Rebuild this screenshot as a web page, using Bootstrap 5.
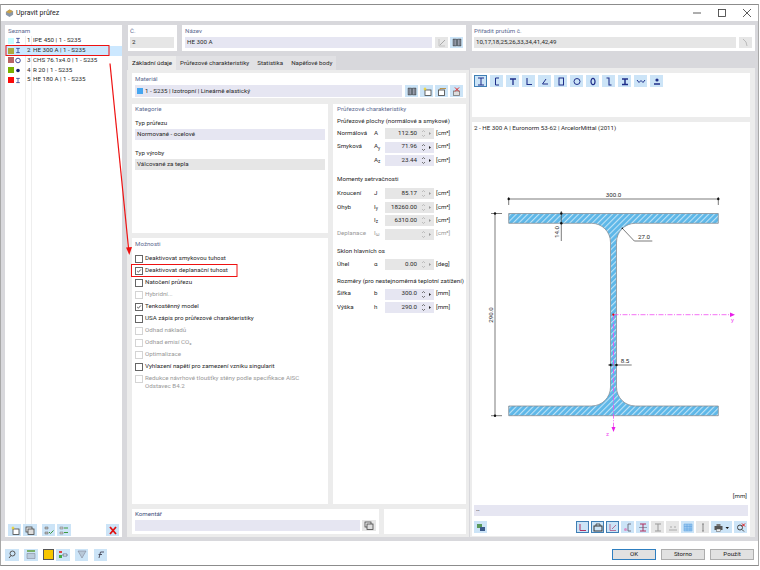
<!DOCTYPE html>
<html lang="cs">
<head>
    <meta charset="UTF-8">
    <title>Upravit průřez</title>
    <link href="https://cdn.jsdelivr.net/npm/bootstrap@5.3.0/dist/css/bootstrap.min.css" rel="stylesheet">
    <style>
        html, body { height: 570px; overflow: hidden; background: #fff; }
        body { font-family: Roboto, "Open Sans", "Liberation Sans", sans-serif; font-size: 6.2px; line-height: 1.2; color: #2a2a2a; }

        .dlg { width: 759px; height: 562px; margin-top: 4px; border-top: 1px solid #8c8c8c; border-right: 1px solid #a8a8a8; border-bottom: 1px solid #8c8c8c; border-left: 1px solid #a8a8a8; position: relative; }
        .dlg-title { height: 16px; padding-left: 4px; font-size: 7px; color: #222; }
        .dlg-main { height: 520px; background: #d8d8dc; padding: 4px 3px 4px 4px; }
        .dlg-foot { height: 24px; padding: 3px 4px 0 4px; }

        .win-btns { gap: 5px; padding-right: 1px; }
        .win-btn { width: 20px; text-align: center; line-height: 8px; }

        .pane { background: #fff; padding: .5px 3px 0; }
        .pane-cap { color: #5d6b91; height: 10px; line-height: 10px; margin-bottom: 1.5px; }
        .gray-wrap { background: #ececec; }

        /* left list */
        .list-pane { width: 117px; flex: none; padding: 0; background: #fff linear-gradient(#eee, #eee) 20px 0 / 1px 100% no-repeat; position: relative; }
        .list-pane::after { content: ""; position: absolute; top: 0; bottom: 0; left: 26px; width: 1px; background: #eee; }
        .list-cap { padding: .5px 3px 0; margin: 0; height: 11px; background: #fff; position: relative; z-index: 1; }
        .list-row { height: 9.8px; display: flex; align-items: center; padding-left: 3px; white-space: nowrap; position: relative; z-index: 1; }
        .list-row.sel { background: #cce8ff; }
        .swatch { width: 6px; height: 6px; margin-right: 1px; flex: none; }
        .list-ico { width: 6px; height: 7px; margin-right: 6px; flex: none; }
        .list-no { width: 6px; flex: none; }
        .list-tools { padding: 0 3px 1px; position: relative; z-index: 1; background: #fff; }

        /* fields */
        .fld { background: #e6e6f2; height: 11px; line-height: 11px; padding: 0 2px; font-size: 6.2px; border: 0; border-radius: 0; color: #2a2a2a; min-height: 0; }
        .fld.off { background: #e6e6e6; }
        .form-select.fld { height: 11px; padding: 0 2px; background-size: 9px 8px; background-position: right 2px center; font-family: inherit; line-height: 11px; }

        /* tabs */
        .tab-strip { height: 14px; margin-top: 5px; border: 0; flex-wrap: nowrap; padding-left: 1px; }
        .tab-strip .nav-link { font-size: 6.2px; padding: 0 4px; height: 14px; line-height: 14px; border: 0; border-radius: 0; background: #e1e1e4; color: #2a2a2a; margin: 0; }
        .tab-strip .nav-link.active { background: #ececec; color: #222; }
        .tab-box { padding: 3px 3px 3px 5px; gap: 5.5px; height: 467px; width: 342px; }

        /* props */
        .prop-row { display: grid; grid-template-columns: 37px 11px 49px auto; align-items: center; height: 13.4px; white-space: nowrap; }
        .prop-val { background: #e6e6f2; height: 11px; display: flex; align-items: center; justify-content: flex-end; }
        .prop-val.off { background: #e6e6e6; }
        .prop-val .num { padding-right: 2px; }
        .spin { width: 15px; flex: none; display: flex; align-items: center; }
        .prop-unit { padding-left: 2px; }
        .prop-head { height: 11.5px; line-height: 11.5px; white-space: nowrap; }
        .dim { color: #999; }

        /* options */
        .opt { display: flex; align-items: flex-start; min-height: 0; height: 12px; gap: 2.5px; padding-left: 0; margin: 0; white-space: nowrap; }
        .opt .form-check-input { width: 7.5px; height: 7.5px; margin: 2.2px 0 0 0; flex: none; border: .8px solid #666; border-radius: 0; background-color: #fff; float: none; opacity: 1; background-size: 100%; }
        .opt .form-check-input:checked { background-color: #fff; border-color: #666; background-image: url("data:image/svg+xml,%3csvg xmlns='http://www.w3.org/2000/svg' viewBox='0 0 20 20'%3e%3cpath fill='none' stroke='%23444' stroke-width='3' d='M4 10l4 4 8-9'/%3e%3c/svg%3e"); }
        .opt .form-check-input:disabled { border-color: #d4d4d4; }
        .opt .form-check-label { line-height: 7.7px; margin-top: 2px; }
        .opt.off .form-check-input ~ .form-check-label { color: #999; opacity: 1; }

        /* tool buttons */
        .tb { width: 13px; height: 12px; background: #cce4f7; display: inline-flex; align-items: center; justify-content: center; flex: none; padding: 0; border: 0; border-radius: 0; }
        .tb.wide { width: 14px; }
        .tb.short { height: 11px; }
        .tb.grey { background: #e6e6e6; }
        .tb.on { outline: 1px solid #3f7fb5; outline-offset: -1px; }
        .tb svg { width: 10px; height: 9px; display: block; }

        .shape-bar { gap: 3px; height: 44px; padding: 2px; flex: none; }
        .draw-svg { display: block; width: 274px; height: 366px; flex: none; }
        .draw-svg text { font-family: Roboto, "Open Sans", "Liberation Sans", sans-serif; font-size: 6.2px; fill: #2a2a2a; }

        .foot-btn { width: 44px; height: 11.5px; padding: 0; font-size: 6.2px; line-height: 9px; border: 1px solid #adadad; border-radius: 0; background: #e1e1e1; color: #222; }
        .foot-btn.main-btn { border: 1.5px solid #2f7fc0; }

        .overlay { position: absolute; left: -1px; top: -5px; width: 760px; height: 570px; pointer-events: none; z-index: 5; }
    </style>
</head>
<body>
<svg width="0" height="0" class="position-absolute">
    <defs>
        <pattern id="hatch" width="4" height="4" patternUnits="userSpaceOnUse" patternTransform="rotate(45)">
            <rect width="4" height="4" fill="#5db7e8"/>
            <rect width="1.1" height="4" fill="#bfe3f6"/>
        </pattern>
        <symbol id="i-ibeam" viewBox="0 0 10 9"><path d="M2 1h6M2 8h6M5 1v7" fill="none" stroke="#2b3a8c" stroke-width="1.3"/></symbol>
        <symbol id="i-new" viewBox="0 0 10 9"><rect x="3" y="3" width="6" height="5.5" fill="#fff" stroke="#444" stroke-width=".8"/><path d="M3 0l.7 1.5L5 2l-1.3.6L3 4l-.7-1.4L1 2l1.3-.5z" fill="#f2d21b"/></symbol>
        <symbol id="i-copy" viewBox="0 0 10 9"><rect x="1" y="1" width="6" height="5" fill="#eee" stroke="#444" stroke-width=".8"/><rect x="3" y="3" width="6" height="5.5" fill="#ddd" stroke="#444" stroke-width=".8"/></symbol>
        <symbol id="i-checks" viewBox="0 0 10 9"><path d="M1 1h3v2H1zM1 6h3v2H1z" fill="#bbb" stroke="#666" stroke-width=".5"/><path d="M5 6l1.5 1.5L9.5 4.5" fill="none" stroke="#3c9a3c" stroke-width="1"/></symbol>
        <symbol id="i-checks2" viewBox="0 0 10 9"><path d="M1 1h3v2H1zM1 6h3v2H1z" fill="#ccc" stroke="#777" stroke-width=".5"/><path d="M5 2h4M5 6.5h4" stroke="#3c9a3c" stroke-width="1"/></symbol>
        <symbol id="i-book" viewBox="0 0 10 9"><path d="M1 1h3.600v7H1zM5.400 1H9v7H5.400z" fill="#56606c" stroke="#333" stroke-width=".4"/><path d="M2 1.500v6M3.400 1.500v6M6.500 1.500v6M7.900 1.500v6" stroke="#dde" stroke-width=".5"/></symbol>
        <symbol id="i-box" viewBox="0 0 10 9"><rect x="1.5" y="3" width="6" height="5.5" fill="#fff" stroke="#555" stroke-width=".9"/><path d="M3 3V1.500h6" fill="none" stroke="#b88a3a" stroke-width=".9"/></symbol>
        <symbol id="i-del" viewBox="0 0 10 9"><rect x="1.5" y="4" width="6" height="4.5" fill="#ddd" stroke="#777" stroke-width=".8"/><path d="M3 .5l4 4M7 .5l-4 4" stroke="#d22" stroke-width="1"/></symbol>
        <symbol id="i-x" viewBox="0 0 10 9"><path d="M2 1l6 7M8 1L2 8" stroke="#e01010" stroke-width="1.8"/></symbol>
        <symbol id="i-edit" viewBox="0 0 10 9"><path d="M2 1v7h6" fill="none" stroke="#bbb" stroke-width=".8"/><path d="M3 7l5-5" stroke="#aaa" stroke-width="1"/></symbol>
        <symbol id="i-spin" viewBox="0 0 15 9"><path d="M3 3l1.500-1.500L6 3M3 6l1.500 1.500L6 6" fill="none" stroke="#444" stroke-width=".7"/><path d="M10 3l2 1.500L10 6z" fill="#222"/></symbol>
        <symbol id="i-spin-off" viewBox="0 0 15 9"><path d="M3 3l1.500-1.500L6 3M3 6l1.500 1.500L6 6" fill="none" stroke="#aaa" stroke-width=".7"/><path d="M10 3l2 1.500L10 6z" fill="#999"/></symbol>
    </defs>
</svg>

<div class="dlg d-flex flex-column">
    <!-- title -->
    <div class="dlg-title d-flex align-items-center">
        <svg width="9" height="10" viewBox="0 0 10 10" style="margin-right:2px"><path d="M1 4l4-3 4 2v4l-4 2.500L1 7z" fill="#8a97a8"/><path d="M5 1l4 2-4 2.500L1 4z" fill="#c9a24a"/></svg>
        <span class="flex-grow-1">Upravit průřez</span>
        <div class="d-flex win-btns">
            <span class="win-btn"><svg width="8" height="8" viewBox="0 0 8 8"><path d="M0 4h8" stroke="#333" stroke-width=".8"/></svg></span>
            <span class="win-btn"><svg width="8" height="8" viewBox="0 0 8 8"><rect x=".5" y=".5" width="7" height="7" fill="none" stroke="#333" stroke-width=".8"/></svg></span>
            <span class="win-btn"><svg width="8" height="8" viewBox="0 0 8 8"><path d="M0 0l8 8M8 0L0 8" stroke="#333" stroke-width=".8"/></svg></span>
        </div>
    </div>

    <div class="dlg-main d-flex">
        <!-- Seznam -->
        <div class="pane list-pane d-flex flex-column" style="margin-right:5px">
            <div class="pane-cap list-cap">Seznam</div>
            <div class="flex-grow-1">
                <div class="list-row"><span class="swatch" style="background:#c8fbff"></span><svg class="list-ico"><use href="#i-ibeam"/></svg><span class="list-no">1</span><span>IPE 450 | 1 - S235</span></div>
                <div class="list-row sel"><span class="swatch" style="background:#aaa840"></span><svg class="list-ico"><use href="#i-ibeam"/></svg><span class="list-no">2</span><span>HE 300 A | 1 - S235</span></div>
                <div class="list-row"><span class="swatch" style="background:#b86464"></span><svg class="list-ico" viewBox="0 0 6 7"><circle cx="3" cy="3.5" r="2.3" fill="none" stroke="#2b3a8c" stroke-width=".9"/></svg><span class="list-no">3</span><span>CHS 76.1x4.0 | 1 - S235</span></div>
                <div class="list-row"><span class="swatch" style="background:#7ab000"></span><svg class="list-ico" viewBox="0 0 6 7"><circle cx="3" cy="3.5" r="1.8" fill="#12206e"/></svg><span class="list-no">4</span><span>R 20 | 1 - S235</span></div>
                <div class="list-row"><span class="swatch" style="background:#fa0a0a"></span><svg class="list-ico"><use href="#i-ibeam"/></svg><span class="list-no">5</span><span>HE 180 A | 1 - S235</span></div>
            </div>
            <div class="list-tools d-flex">
                <button class="tb"><svg><use href="#i-new"/></svg></button>
                <button class="tb wide" style="margin-left:2px"><svg><use href="#i-copy"/></svg></button>
                <button class="tb" style="margin-left:5px"><svg><use href="#i-checks"/></svg></button>
                <button class="tb wide" style="margin-left:2px"><svg><use href="#i-checks2"/></svg></button>
                <button class="tb ms-auto"><svg><use href="#i-x"/></svg></button>
            </div>
        </div>

        <!-- middle column -->
        <div class="d-flex flex-column" style="width:342px;flex:none;margin-right:1px">
            <div class="d-flex" style="gap:5px;padding-left:1px">
                <div class="pane" style="width:49px;height:26px;padding-left:2px">
                    <div class="pane-cap">Č.</div>
                    <div class="fld off">2</div>
                </div>
                <div class="pane" style="width:284px;height:26px">
                    <div class="pane-cap">Název</div>
                    <div class="d-flex" style="gap:2px">
                        <div class="fld flex-grow-1" style="margin-right:1.5px">HE 300 A</div>
                        <button class="tb grey short"><svg><use href="#i-edit"/></svg></button>
                        <button class="tb short"><svg><use href="#i-book"/></svg></button>
                    </div>
                </div>
            </div>
            <ul class="nav nav-tabs tab-strip">
                <li class="nav-item"><a class="nav-link active" href="#">Základní údaje</a></li>
                <li class="nav-item"><a class="nav-link" href="#">Průřezové charakteristiky</a></li>
                <li class="nav-item"><a class="nav-link" href="#">Statistika</a></li>
                <li class="nav-item"><a class="nav-link" href="#">Napěťové body</a></li>
            </ul>
            <div class="gray-wrap tab-box d-flex flex-column">
                <div class="pane" style="height:25px;flex:none">
                    <div class="pane-cap">Materiál</div>
                    <div class="d-flex" style="gap:2px">
                        <div class="form-select fld flex-grow-1 d-flex align-items-center" style="height:12px;margin-right:1px"><span class="swatch" style="background:#46a6f0;margin-right:2px"></span>1 - S235 | Izotropní | Lineárně elastický</div>
                        <button class="tb"><svg><use href="#i-book"/></svg></button>
                        <button class="tb"><svg><use href="#i-new"/></svg></button>
                        <button class="tb"><svg><use href="#i-box"/></svg></button>
                        <button class="tb"><svg><use href="#i-del"/></svg></button>
                    </div>
                </div>

                <div class="d-flex" style="gap:5px;height:400px;flex:none">
                    <div class="d-flex flex-column" style="width:196px;gap:5px;flex:none">
                        <div class="pane" style="height:129.5px;flex:none">
                            <div class="pane-cap">Kategorie</div>
                            <div style="margin-top:3.5px;height:11px;line-height:11px">Typ průřezu</div>
                            <select class="form-select fld"><option>Normované - ocelové</option></select>
                            <div style="margin-top:8px;height:11px;line-height:11px">Typ výroby</div>
                            <div class="fld off">Válcované za tepla</div>
                        </div>
                        <div class="pane flex-grow-1">
                            <div class="pane-cap" style="margin-bottom:4.5px">Možnosti</div>
                            <div class="form-check opt"><input class="form-check-input" type="checkbox"><label class="form-check-label">Deaktivovat smykovou tuhost</label></div>
                            <div class="form-check opt"><input class="form-check-input" type="checkbox" checked><label class="form-check-label">Deaktivovat deplanační tuhost</label></div>
                            <div class="form-check opt"><input class="form-check-input" type="checkbox"><label class="form-check-label">Natočení průřezu</label></div>
                            <div class="form-check opt off"><input class="form-check-input" type="checkbox" disabled><label class="form-check-label">Hybridní...</label></div>
                            <div class="form-check opt"><input class="form-check-input" type="checkbox" checked><label class="form-check-label">Tenkostěnný model</label></div>
                            <div class="form-check opt"><input class="form-check-input" type="checkbox"><label class="form-check-label">USA zápis pro průřezové charakteristiky</label></div>
                            <div class="form-check opt off"><input class="form-check-input" type="checkbox" disabled><label class="form-check-label">Odhad nákladů</label></div>
                            <div class="form-check opt off"><input class="form-check-input" type="checkbox" disabled><label class="form-check-label">Odhad emisí CO₂</label></div>
                            <div class="form-check opt off"><input class="form-check-input" type="checkbox" disabled><label class="form-check-label">Optimalizace</label></div>
                            <div class="form-check opt"><input class="form-check-input" type="checkbox"><label class="form-check-label">Vyhlazení napětí pro zamezení vzniku singularit</label></div>
                            <div class="form-check opt off"><input class="form-check-input" type="checkbox" disabled><label class="form-check-label">Redukce návrhové tloušťky stěny podle specifikace AISC<br>Odstavec B4.2</label></div>
                        </div>
                    </div>

                    <div class="pane" style="width:133px;flex:none;padding-left:4px">
                        <div class="pane-cap">Průřezové charakteristiky</div>
                        <div class="prop-head" style="margin-top:1.5px">Průřezové plochy (normálové a smykové)</div>
                        <div class="prop-row"><span>Normálová</span><span>A</span><div class="prop-val off"><span class="num">112.50</span><svg class="spin" height="9"><use href="#i-spin-off"/></svg></div><span class="prop-unit">[cm²]</span></div>
                        <div class="prop-row"><span>Smyková</span><span>A<sub>y</sub></span><div class="prop-val"><span class="num">71.96</span><svg class="spin" height="9"><use href="#i-spin"/></svg></div><span class="prop-unit">[cm²]</span></div>
                        <div class="prop-row"><span></span><span>A<sub>z</sub></span><div class="prop-val"><span class="num">23.44</span><svg class="spin" height="9"><use href="#i-spin"/></svg></div><span class="prop-unit">[cm²]</span></div>

                        <div class="prop-head" style="margin-top:7px;margin-bottom:1.5px">Momenty setrvačnosti</div>
                        <div class="prop-row"><span>Kroucení</span><span>J</span><div class="prop-val off"><span class="num">85.17</span><svg class="spin" height="9"><use href="#i-spin-off"/></svg></div><span class="prop-unit">[cm⁴]</span></div>
                        <div class="prop-row"><span>Ohyb</span><span>I<sub>y</sub></span><div class="prop-val off"><span class="num">18260.00</span><svg class="spin" height="9"><use href="#i-spin-off"/></svg></div><span class="prop-unit">[cm⁴]</span></div>
                        <div class="prop-row"><span></span><span>I<sub>z</sub></span><div class="prop-val off"><span class="num">6310.00</span><svg class="spin" height="9"><use href="#i-spin-off"/></svg></div><span class="prop-unit">[cm⁴]</span></div>
                        <div class="prop-row dim"><span>Deplanace</span><span>I<sub>ω</sub></span><div class="prop-val off"><span class="num"></span><svg class="spin" height="9"><use href="#i-spin-off"/></svg></div><span class="prop-unit">[cm⁶]</span></div>

                        <div class="prop-head" style="margin-top:5.25px;margin-bottom:.5px">Sklon hlavních os</div>
                        <div class="prop-row"><span>Úhel</span><span>α</span><div class="prop-val off"><span class="num">0.00</span><svg class="spin" height="9"><use href="#i-spin-off"/></svg></div><span class="prop-unit">[deg]</span></div>

                        <div class="prop-head" style="margin-top:4.5px">Rozměry (pro nestejnoměrná teplotní zatížení)</div>
                        <div class="prop-row"><span>Šířka</span><span>b</span><div class="prop-val"><span class="num">300.0</span><svg class="spin" height="9"><use href="#i-spin"/></svg></div><span class="prop-unit">[mm]</span></div>
                        <div class="prop-row"><span>Výška</span><span>h</span><div class="prop-val"><span class="num">290.0</span><svg class="spin" height="9"><use href="#i-spin"/></svg></div><span class="prop-unit">[mm]</span></div>
                    </div>
                </div>

                <div class="d-flex" style="gap:5px;height:25px;flex:none">
                    <div class="pane" style="width:247px">
                        <div class="pane-cap" style="margin-bottom:.5px;height:8px;line-height:8px;color:#3f5080">Komentář</div>
                        <div class="d-flex" style="gap:2px;margin-top:2.5px">
                            <select class="form-select fld flex-grow-1" style="width:auto"><option></option></select>
                            <button class="tb grey short wide"><svg><use href="#i-copy"/></svg></button>
                        </div>
                    </div>
                    <div class="pane" style="width:82px"></div>
                </div>
            </div>
        </div>

        <!-- right column -->
        <div class="d-flex flex-column" style="width:285px;flex:none">
            <div class="pane" style="height:26px;margin-left:2px;padding-left:2px">
                <div class="pane-cap">Přiřadit prutům č.</div>
                <div class="d-flex" style="gap:3px">
                    <div class="fld off flex-grow-1">10,17,18,25,26,33,34,41,42,49</div>
                    <button class="tb grey short"><svg viewBox="0 0 10 9"><path d="M2 1l3 3 1 4" fill="none" stroke="#bbb"/></svg></button>
                </div>
            </div>
            <div class="gray-wrap d-flex flex-column" style="margin-top:17px;height:469px;padding:5px 5px 1px 2px;gap:5px">
                <div class="pane d-flex shape-bar">
                    <button class="tb on"><svg viewBox="0 0 10 9"><path d="M2 1h6M2 8h6M5 1v7" fill="none" stroke="#1f2f8a" stroke-width="1"/></svg></button>
                    <button class="tb"><svg viewBox="0 0 10 9"><path d="M7 1H3.500v7H7" fill="none" stroke="#1f2f8a" stroke-width="1"/></svg></button>
                    <button class="tb"><svg viewBox="0 0 10 9"><path d="M2 2h6M5 2v6" fill="none" stroke="#1f2f8a" stroke-width="1.3"/></svg></button>
                    <button class="tb"><svg viewBox="0 0 10 9"><path d="M3 1v6.500h5" fill="none" stroke="#1f2f8a" stroke-width="1.1"/></svg></button>
                    <button class="tb"><svg viewBox="0 0 10 9"><path d="M6 2L2.500 7H8" fill="none" stroke="#1f2f8a" stroke-width="1"/></svg></button>
                    <button class="tb"><svg viewBox="0 0 10 9"><rect x="3" y="1" width="4.5" height="7" fill="none" stroke="#1f2f8a" stroke-width="1"/></svg></button>
                    <button class="tb"><svg viewBox="0 0 10 9"><circle cx="5" cy="4.5" r="3" fill="none" stroke="#1f2f8a" stroke-width="1"/></svg></button>
                    <button class="tb"><svg viewBox="0 0 10 9"><ellipse cx="5" cy="4.5" rx="2" ry="3.2" fill="none" stroke="#1f2f8a" stroke-width="1.2"/></svg></button>
                    <button class="tb"><svg viewBox="0 0 10 9"><path d="M2.500 1H5v7h2.500" fill="none" stroke="#1f2f8a" stroke-width="1.1"/></svg></button>
                    <button class="tb"><svg viewBox="0 0 10 9"><path d="M2 2h6M5 2v5M2 7.500h6" fill="none" stroke="#1f2f8a" stroke-width="1.5"/></svg></button>
                    <button class="tb"><svg viewBox="0 0 10 9"><path d="M1 3l2 2.500L5 3.500 7 5.500 9 3" fill="none" stroke="#1f2f8a" stroke-width="1"/></svg></button>
                    <button class="tb"><svg viewBox="0 0 10 9"><circle cx="5" cy="3" r="1.6" fill="#1f2f8a"/><path d="M2 7h6" stroke="#1f2f8a" stroke-width="1.5"/></svg></button>
                </div>
                <div class="pane flex-grow-1 d-flex flex-column" style="padding:2px 2px 1px">
                    <div style="height:10px;line-height:8px">2 - HE 300 A | Euronorm 53-62 | ArcelorMittal (2011)</div>
                    <!-- section drawing: 1 unit = 1 page px, svg left=474 top=134 -->
                    <svg class="draw-svg" viewBox="474 134 274 366">
                        <path d="M508.7 213.5H718.3V223.3H635.4A18.9 18.9 0 0 0 616.5 242.2V387.1A18.9 18.9 0 0 0 635.4 406H718.3V415.7H508.7V406H591.6A18.9 18.9 0 0 0 610.5 387.1V242.2A18.9 18.9 0 0 0 591.6 223.3H508.7Z" fill="url(#hatch)" stroke="#8a8f95" stroke-width=".8"/>
                        <g stroke="#444" stroke-width=".7" fill="none">
                            <path d="M508.7 199H718.3M508.7 197v8M718.3 197v8"/>
                            <path d="M495 213.5V415.7M491 213.5h11M491 415.7h11"/>
                            <path d="M561.3 211V241"/>
                            <path d="M622.3 228.3L634.3 241H652.3"/>
                            <path d="M608 365H631.7"/>
                        </g>
                        <g fill="#111">
                            <circle cx="508.7" cy="199" r="1.2"/><circle cx="718.3" cy="199" r="1.2"/>
                            <circle cx="495" cy="213.5" r="1.2"/><circle cx="495" cy="415.7" r="1.2"/>
                            <circle cx="561.3" cy="213.5" r="1.2"/><circle cx="561.3" cy="223.3" r="1.2"/>
                            <circle cx="610.5" cy="365" r="1.2"/><circle cx="616.5" cy="365" r="1.2"/>
                            <circle cx="622.3" cy="228.3" r=".8"/>
                        </g>
                        <text x="613.5" y="197" text-anchor="middle">300.0</text>
                        <text x="644" y="239" text-anchor="middle">27.0</text>
                        <text x="625" y="363" text-anchor="middle">8.5</text>
                        <text transform="translate(559 232) rotate(-90)" text-anchor="middle">14.0</text>
                        <text transform="translate(493 315) rotate(-90)" text-anchor="middle">290.0</text>
                        <g stroke="#f04cf0" stroke-width=".8" fill="none" stroke-dasharray="5 1.5 1 1.5">
                            <path d="M613.5 314.7H732"/>
                            <path d="M613.5 314.7V428"/>
                        </g>
                        <path d="M730 312.5l5 2.2-5 2.2zM611.5 427l2 5 2-5z" fill="#e81ee8"/>
                        <circle cx="613.3" cy="314.7" r="1.1" fill="#e01010"/>
                        <text x="731" y="322" style="fill:#f04cf0">y</text>
                        <text x="606" y="436" style="fill:#f04cf0">z</text>
                        <text x="747" y="498" text-anchor="end">[mm]</text>
                    </svg>
                    <select class="form-select fld" style="margin-top:5px;flex:none"><option>--</option></select>
                    <div class="d-flex mt-auto" style="gap:2px;padding:0 1px 2px 0">
                        <button class="tb me-auto"><svg viewBox="0 0 10 9"><rect x="1" y="1" width="5" height="4" fill="#5a9a5a"/><rect x="4" y="4" width="5" height="4" fill="#3a5a8a"/></svg></button>
                        <button class="tb on"><svg viewBox="0 0 10 9"><path d="M2 1v6.500h6" fill="none" stroke="#b03060" stroke-width="1"/></svg></button>
                        <button class="tb on"><svg viewBox="0 0 10 9"><rect x="1" y="3" width="8" height="5" fill="none" stroke="#333"/><path d="M3 3V1h4v2" fill="none" stroke="#333" stroke-width=".8"/></svg></button>
                        <button class="tb on"><svg viewBox="0 0 10 9"><path d="M2 1v6.500h6M4 6l4-4" fill="none" stroke="#b05080" stroke-width=".8"/></svg></button>
                        <button class="tb"><svg viewBox="0 0 10 9"><path d="M8 1H5v7h3" fill="none" stroke="#667" stroke-width=".9"/><circle cx="2.5" cy="6.5" r="1.5" fill="#d890c8"/></svg></button>
                        <button class="tb"><svg viewBox="0 0 10 9"><path d="M2 1h6M2 8h6M5 1v7" fill="none" stroke="#b03060" stroke-width="1"/><path d="M1 4.500h8" stroke="#556" stroke-width=".5"/></svg></button>
                        <button class="tb grey"><svg viewBox="0 0 10 9"><path d="M2 1h6M2 8h6M5 1v7" fill="none" stroke="#999" stroke-width="1"/></svg></button>
                        <button class="tb grey"><svg viewBox="0 0 10 9"><path d="M1 7h8M3 3v2M7 3v2" stroke="#aaa" stroke-width="1"/></svg></button>
                        <button class="tb"><svg viewBox="0 0 10 9"><path d="M1 1h8v7H1zM1 3.500h8M1 6h8M4 1v7M7 1v7" fill="#9cc8f0" stroke="#5aa0e0" stroke-width=".5"/></svg></button>
                        <button class="tb grey"><svg viewBox="0 0 10 9"><path d="M5 1v7M4 1h2M4 8h2" stroke="#888"/></svg></button>
                        <button class="tb" style="width:21px"><svg viewBox="0 0 16 9" style="width:17px"><rect x="1" y="3" width="8" height="4" fill="#555"/><rect x="3" y="1" width="4" height="2" fill="#777"/><rect x="3" y="6" width="4" height="2.5" fill="#eee" stroke="#555" stroke-width=".5"/><path d="M12 4h3.500l-1.700 2z" fill="#111"/></svg></button>
                        <button class="tb"><svg viewBox="0 0 10 9"><circle cx="4" cy="4.5" r="2.5" fill="none" stroke="#444"/><path d="M6 6.500l2 2" stroke="#444"/><path d="M6 .5l3 3M9 .5l-3 3" stroke="#e01010"/></svg></button>
                    </div>
                </div>
            </div>
        </div>
    </div>

    <div class="dlg-foot d-flex align-items-center" style="gap:5px">
        <button class="tb wide"><svg viewBox="0 0 10 9"><circle cx="5.5" cy="3.5" r="2.5" fill="none" stroke="#555"/><path d="M4 5.500L2 8" stroke="#555"/></svg></button>
        <button class="tb wide"><svg viewBox="0 0 10 9"><rect x="1" y="0" width="8" height="2" fill="#7ab06a"/><path d="M1 3.500h8v5H1z" fill="#bcd" stroke="#667" stroke-width=".4"/></svg></button>
        <span style="width:11px;height:11px;background:#f7c600;border:1px solid #555"></span>
        <button class="tb wide" style="margin-left:-3px"><svg viewBox="0 0 10 9"><rect x="1" y="1" width="3" height="2" fill="#d44"/><rect x="1" y="5" width="3" height="3" fill="#4a4"/><path d="M5 4h4v2H5z" fill="#fff" stroke="#346" stroke-width=".6"/></svg></button>
        <button class="tb"><svg viewBox="0 0 10 9"><path d="M1 1h8L5 8z" fill="#b8c8d8" stroke="#778" stroke-width=".5"/></svg></button>
        <button class="tb" style="margin-left:1px"><svg viewBox="0 0 10 9"><path d="M3 8l1.500-6H8M2.500 4.500h3.500" fill="none" stroke="#445" stroke-width=".9"/></svg></button>
        <div class="ms-auto d-flex" style="gap:5px">
            <button class="btn foot-btn main-btn">OK</button>
            <button class="btn foot-btn">Storno</button>
            <button class="btn foot-btn">Použít</button>
        </div>
    </div>

    <!-- annotation marks drawn over the dialog -->
    <svg class="overlay" viewBox="0 0 760 570">
        <rect x="6" y="45.5" width="103" height="10" fill="none" stroke="#e11" stroke-width="1"/>
        <rect x="131.5" y="264.5" width="105.5" height="12" fill="none" stroke="#e11" stroke-width="1"/>
        <path d="M110 63.5L128.5 248" fill="none" stroke="#e11" stroke-width="1.2"/>
        <path d="M126 247.5l3.3 7.500 2.700-8z" fill="#e11"/>
    </svg>
</div>
</body>
</html>
